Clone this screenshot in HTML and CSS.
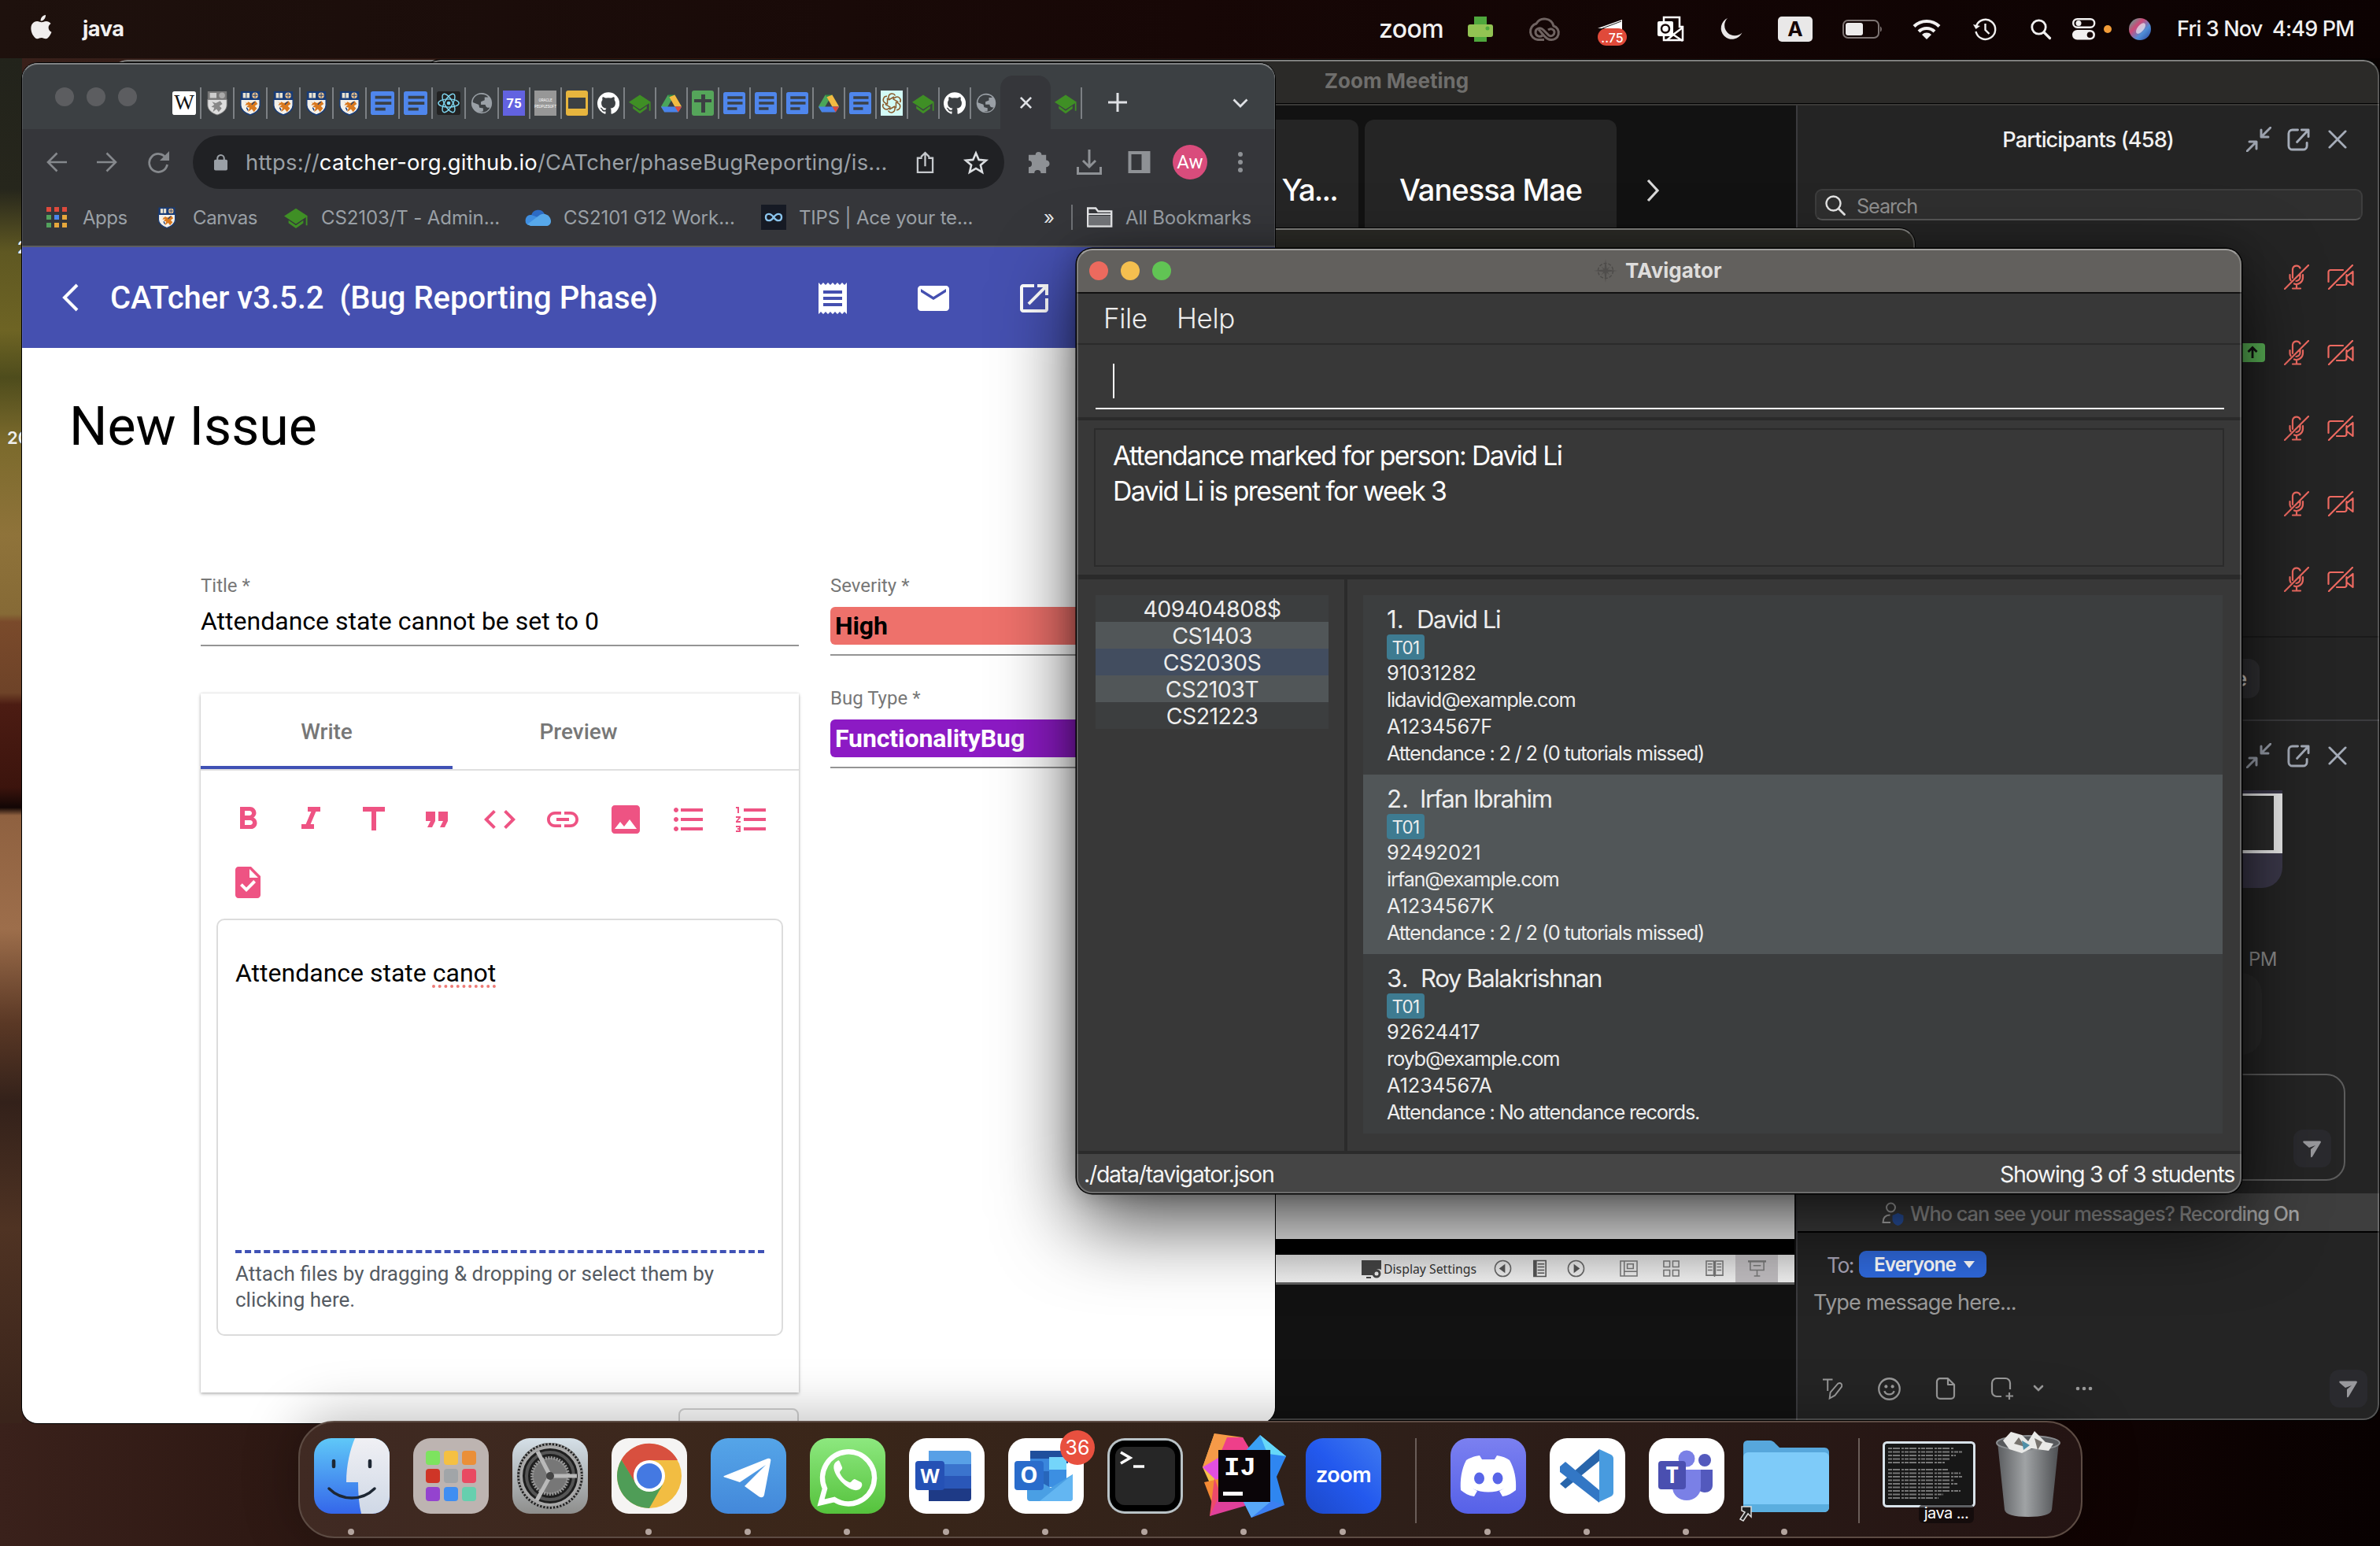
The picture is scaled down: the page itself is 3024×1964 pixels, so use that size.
FILE: index.html
```html
<!DOCTYPE html>
<html lang="en">
<head>
<meta charset="utf-8">
<title>Desktop</title>
<link rel="stylesheet" href="styles.css">
</head>
<body>
<svg class="defs" width="0" height="0">
  <defs>
    <linearGradient id="g-finder" x2="0" y2="1"><stop offset="0" stop-color="#5fc8f8"/><stop offset="1" stop-color="#3466ea"/></linearGradient>
    <linearGradient id="g-face" x2="0" y2="1"><stop offset="0" stop-color="#f0f0f4"/><stop offset="1" stop-color="#cfd8e6"/></linearGradient>
    <linearGradient id="g-settings" x2="0" y2="1"><stop offset="0" stop-color="#d5e0e8"/><stop offset="1" stop-color="#8e8e8c"/></linearGradient>
    <linearGradient id="g-wa" x2="0" y2="1"><stop offset="0" stop-color="#8de87f"/><stop offset="1" stop-color="#55c23c"/></linearGradient>
    <linearGradient id="g-tg" x2="0" y2="1"><stop offset="0" stop-color="#55a5e8"/><stop offset="1" stop-color="#4388da"/></linearGradient>
    <linearGradient id="g-zoom" x1="1" x2="0" y2="1"><stop offset="0" stop-color="#3f7af0"/><stop offset=".5" stop-color="#2359ee"/><stop offset="1" stop-color="#1c48c8"/></linearGradient>
    <linearGradient id="g-discord" x2="0" y2="1"><stop offset="0" stop-color="#7b80f0"/><stop offset="1" stop-color="#5661e8"/></linearGradient>
    <linearGradient id="g-trash" x2="1" y2="0"><stop offset="0" stop-color="#5b5d60"/><stop offset=".45" stop-color="#a0a3a5"/><stop offset="1" stop-color="#4d4f52"/></linearGradient>
    <linearGradient id="g-siri" x2="1" y2="1"><stop offset="0" stop-color="#3fb79a"/><stop offset=".35" stop-color="#cf4a78"/><stop offset=".65" stop-color="#4f8fd8"/><stop offset="1" stop-color="#2a3f9a"/></linearGradient>

    <symbol id="doc" viewBox="0 0 32 32"><rect width="32" height="32" rx="3" fill="#4f86ec"/><path d="M6 6h22v4H6zM6 14h22v4H6zM6 22h14v4H6z" fill="#3a4046"/></symbol>
    <symbol id="crest" viewBox="0 0 32 32"><path d="M3 0h26v11H3z" fill="#183c78"/><path d="M6 2h9v7H6z" fill="#e8e2d2"/><path d="M10.500 2v7" stroke="#183c78"/><circle cx="22.500" cy="5.500" r="4" fill="#efc48c"/><path d="M22.500 2v7M19 5.500h7" stroke="#183c78"/><path d="M3 11h26v8c0 6-6 11-13 13C9 30 3 25 3 19z" fill="#f4f1ea" stroke="#183c78" stroke-width="1.500"/><path d="M8 14l4 2 1-2 4 2 6-3 3 4-4 3 3 3-4 5-3-4-5 4 2-6-4-1 3-3-5 1 2-3z" fill="#d9791f"/><path d="M11 22l2 4M22 14l-4 4" stroke="#183c78" stroke-width="1.500"/></symbol>
    <symbol id="crest-grey" viewBox="0 0 32 32"><path d="M3 0h26v11H3z" fill="#777"/><path d="M6 2h9v7H6z" fill="#ccc"/><circle cx="22.500" cy="5.500" r="4" fill="#aaa"/><path d="M3 11h26v8c0 6-6 11-13 13C9 30 3 25 3 19z" fill="#ddd" stroke="#777"/><path d="M9 14l5 2 6-3 3 4-4 3 3 3-4 5-3-4-5 4 2-6-4-1 4-3z" fill="#888"/></symbol>
    <symbol id="grad" viewBox="0 0 32 32"><path d="M16 4L0 14.500 16 25l16-10.500z" fill="#3f8f25"/><path d="M6 20v4l10 7 10-7v-4l-10 7z" fill="#3f8f25"/><path d="M30.500 15v12" stroke="#3f8f25" stroke-width="2"/></symbol>
    <symbol id="github" viewBox="0 0 32 32"><path fill="#fff" d="M16 .4a16 16 0 0 0-5.060 31.180c.8.150 1.090-.35 1.090-.77v-2.700c-4.450.97-5.390-2.150-5.390-2.150-.73-1.850-1.780-2.340-1.780-2.340-1.450-1 .110-.97.110-.97 1.610.11 2.460 1.650 2.460 1.650 1.430 2.450 3.750 1.740 4.660 1.330.15-1.040.56-1.740 1.020-2.140-3.550-.4-7.290-1.780-7.290-7.910 0-1.750.62-3.170 1.650-4.290-.17-.4-.71-2.030.16-4.230 0 0 1.340-.43 4.400 1.640a15.300 15.300 0 0 1 8 0c3.060-2.070 4.400-1.640 4.400-1.640.87 2.200.33 3.830.16 4.230 1.020 1.120 1.640 2.550 1.640 4.290 0 6.150-3.740 7.500-7.300 7.900.57.500 1.080 1.470 1.080 2.970v4.390c0 .430.290.930 1.100.770A16 16 0 0 0 16 .4z"/></symbol>
    <symbol id="globe" viewBox="0 0 32 32"><circle cx="16" cy="16" r="14" fill="#9aa0a6"/><path d="M15 4c-6 0-11 5-11 11l8 3 1 4 5 1v4c-2 1-4 1-6 0 5 3 12 1 15-5-3 1-6-1-6-4h-6v-4l5-2V8h5c-2-3-6-4-10-4z" fill="#3c4043"/></symbol>
    <symbol id="drive" viewBox="0 0 32 32"><path d="M11 4h10l-5 9z" fill="#2f8d46"/><path d="M11 4L1 21l5 8 10-17z" fill="#4aa65a"/><path d="M21 4l10 17H21L13 7z" fill="#f2bb42"/><path d="M1 21h30l-5 8H6z" fill="#4a83ea"/><path d="M21 21h10l-5 8z" fill="#de4a3c"/></symbol>
    <symbol id="mic-off" viewBox="0 0 32 32"><g fill="none" stroke="#ee6a61" stroke-width="2.200" stroke-linecap="round"><path d="M11 17V6a5 5 0 0 1 9.500-1.500M20.500 12v4a5 5 0 0 1-5 5M7.500 13v4a8 8 0 0 0 1 3M24 13v4a8.300 8.300 0 0 1-11 7.500M16 25v5M11 30.500h10M1 31L31 1"/></g></symbol>
    <symbol id="cam-off" viewBox="0 0 34 32"><g fill="none" stroke="#ee6a61" stroke-width="2.200" stroke-linecap="round" stroke-linejoin="round"><path d="M20 7H4a2.500 2.500 0 0 0-2.500 2.500V22M12 26h10a2.500 2.500 0 0 0 2.500-2.500V13M25 15l7.500-6v17L25 20M2 31L32 1"/></g></symbol>
    <symbol id="shrink" viewBox="0 0 32 32"><g fill="none" stroke="#9ba1ad" stroke-width="3" stroke-linecap="round" stroke-linejoin="round"><path d="M31 1L20 12M19 4v9h9M1 31l11-11M4 19h9v9"/></g></symbol>
    <symbol id="popout" viewBox="0 0 30 30"><g fill="none" stroke="#a5acb8" stroke-width="3" stroke-linecap="round" stroke-linejoin="round"><path d="M14 2H7a5 5 0 0 0-5 5v16a5 5 0 0 0 5 5h14a5 5 0 0 0 5-5v-4M19 2h9v9M27 3L13 18"/></g></symbol>
    <symbol id="cross" viewBox="0 0 26 26"><path d="M2 2l22 22M24 2L2 24" fill="none" stroke="#a5acb8" stroke-width="3" stroke-linecap="round"/></symbol>
    <symbol id="send" viewBox="0 0 24 24"><path d="M1 2.500h20.500c1.500 0 1.800 1 1.200 2L12 22.500c-1 1.400-2 .8-2-.5V13l6-5-8 3-7-6c-1-1-1-2.500 0-2.500z" fill="#98989c"/></symbol>
  </defs>
</svg>

<main class="desktop">
  <span class="desk-label desk-label-a">2</span>
  <span class="desk-label desk-label-b">20</span>

  <header class="menubar">
    <svg class="apple" viewBox="0 0 26 32"><path fill="#f0eeee" d="M18 0c.2 2-0.600 3.900-1.700 5.300C15.100 6.700 13.300 7.800 11.600 7.600c-.2-1.900.7-3.900 1.700-5.100C14.500 1.200 16.500.1 18 0zM24.600 11c-1.900 1.200-3 2.900-3 5.100 0 2.600 1.500 4.700 3.900 5.600-.5 1.600-1.300 3.200-2.300 4.600-1.400 2-2.800 4-5 4-2.200.1-2.900-1.300-5.400-1.300s-3.300 1.200-5.300 1.300c-2.200.1-3.800-2.100-5.200-4.100C-.500 22.200-2 14.800 1.200 10.900 2.700 9 4.900 7.900 7.200 7.900c2.300 0 3.800 1.300 5.700 1.300 1.900 0 3-1.300 5.700-1.300 2.100 0 4.600 1.100 6 3.100z"/></svg>
    <strong class="app-name">java</strong>
    <div class="tray">
      <span class="tray-zoom">zoom</span>
      <svg class="t-print" viewBox="0 0 32 32"><path d="M8 0h16v10H8zM8 22h16v10H8z" fill="#4fa83d"/><rect y="10" width="32" height="16" rx="3" fill="#92c353"/><circle cx="25" cy="15" r="2.500" fill="#4fa83d"/></svg>
      <svg class="t-cc" viewBox="0 0 38 28"><g fill="none" stroke="#6f6361" stroke-width="3"><path d="M20 25.500h-8a10.500 10.500 0 0 1-2-20.500A12 12 0 0 1 32 8a9 9 0 0 1-4 17.500c-4 0-6-3-8-5l-7-8"/><path d="M18 20c-3 2.500-9 1-9-4s6-7 10-3l7 7c4 2 7-1 7-4s-4-6-8-3"/></g></svg>
      <svg class="t-75" viewBox="0 0 38 36"><path d="M0 14L31 3v20H10V14z" fill="#fff"/><path d="M6 14l24-9" stroke="#222"/><rect y="14" width="37" height="22" rx="11" fill="#e04a3a"/><text x="18.500" y="31.500" text-anchor="middle" class="t75">..75</text></svg>
      <svg class="t-outlook" viewBox="0 0 34 32"><path d="M8 1h20v12h4v17H8z" fill="none" stroke="#fff" stroke-width="2.500"/><path d="M8 14l12 9 12-9M12 30l8-7 12 8" fill="none" stroke="#fff" stroke-width="2.500"/><rect y="6" width="20" height="19" rx="2" fill="#fff"/><circle cx="10" cy="15.500" r="5" fill="none" stroke="#150505" stroke-width="2.500"/></svg>
      <svg class="t-moon" viewBox="0 0 28 28"><path d="M9 0a14 14 0 1 0 18.500 18.500A13 13 0 0 1 9 0z" fill="#e9e7e7"/></svg>
      <span class="t-a">A</span>
      <svg class="t-batt" viewBox="0 0 52 24"><rect x="1" y="1" width="45" height="22" rx="6" fill="none" stroke="#7d7473" stroke-width="2"/><rect x="4" y="4" width="22" height="16" rx="3" fill="#ecebeb"/><path d="M48 8.500c2.500 1 2.500 6 0 7z" fill="#7d7473"/></svg>
      <svg class="t-wifi" viewBox="0 0 36 26"><g fill="none" stroke="#f1f0f0" stroke-width="4.200"><path d="M2 9.500a23 23 0 0 1 32 0"/><path d="M8 16a14.500 14.500 0 0 1 20 0"/></g><path d="M18 26l-6-6a8.500 8.500 0 0 1 12 0z" fill="#f1f0f0"/></svg>
      <svg class="t-clock" viewBox="0 0 30 28"><path d="M4 10a12.500 12.500 0 1 1-.500 7M15.500 7v8l5 5" fill="none" stroke="#f1f0f0" stroke-width="2.400"/><path d="M0 8l3.500 6L9 10z" fill="#f1f0f0"/></svg>
      <svg class="t-search" viewBox="0 0 26 26"><circle cx="10.500" cy="10.500" r="8.700" fill="none" stroke="#f1f0f0" stroke-width="2.800"/><path d="M17 17l7.500 7.500" stroke="#f1f0f0" stroke-width="3.200" stroke-linecap="round"/></svg>
      <svg class="t-ctl" viewBox="0 0 30 28"><rect x="1.200" y="1.200" width="27" height="10.500" rx="5.200" fill="none" stroke="#f1f0f0" stroke-width="2.400"/><circle cx="8" cy="6.500" r="3.500" fill="#f1f0f0"/><rect y="15" width="29" height="12.500" rx="6.200" fill="#f1f0f0"/><circle cx="22.500" cy="21.200" r="3.800" fill="#120404"/></svg>
      <i class="t-dot"></i>
      <svg class="t-siri" viewBox="0 0 28 28"><circle cx="14" cy="14" r="14" fill="url(#g-siri)"/><ellipse cx="15" cy="13" rx="8" ry="4" transform="rotate(-50 15 13)" fill="#fff" opacity=".6"/></svg>
      <time class="t-time">Fri 3 Nov&nbsp; 4:49 PM</time>
    </div>
  </header>

  <div class="window back-window"></div>

  <section class="window zoom-window">
    <div class="zoom-title"><span>Zoom Meeting</span></div>
    <div class="zoom-body">
      <div class="stage">
        <div class="gallery">
          <div class="tile tile-a"><span>Ya...</span></div>
          <div class="tile"><span>Vanessa Mae</span></div>
          <svg class="next" viewBox="0 0 18 30"><path d="M3 2l12 13L3 28" fill="none" stroke="#d8d8d8" stroke-width="3.200"/></svg>
        </div>
        <div class="slide"></div>
        <div class="slide-gap"></div>
        <div class="slide-bar">
          <svg class="disp" viewBox="0 0 26 26"><path d="M0 2h25v12a7 7 0 0 0-10 7H0z" fill="#444"/><circle cx="19" cy="19" r="4" fill="none" stroke="#444" stroke-width="3"/><path d="M6 24h6" stroke="#444" stroke-width="2"/></svg>
          <span class="disp-label">Display Settings</span>
          <svg class="sb sb-1" viewBox="0 0 24 24"><circle cx="12" cy="12" r="10.500" fill="none" stroke="#666" stroke-width="1.600"/><path d="M15 6v12l-8-6z" fill="#555"/></svg>
          <svg class="sb sb-2" viewBox="0 0 24 24"><path d="M4 1.500h16v21H4zM9 6h9M9 10h9M9 14h9M9 18h9" fill="none" stroke="#555" stroke-width="1.600"/><path d="M4 1.500h4v21H4z" fill="#555"/></svg>
          <svg class="sb sb-3" viewBox="0 0 24 24"><circle cx="12" cy="12" r="10.500" fill="none" stroke="#666" stroke-width="1.600"/><path d="M9 6v12l8-6z" fill="#555"/></svg>
          <svg class="sb sb-4" viewBox="0 0 24 24"><path d="M1 2h22v20H1zM6 2v20M6 16h17M10 6h8v6h-8z" fill="none" stroke="#777" stroke-width="1.600"/></svg>
          <svg class="sb sb-5" viewBox="0 0 24 24"><path d="M2 2h8v8H2zM14 2h8v8h-8zM2 14h8v8H2zM14 14h8v8h-8z" fill="none" stroke="#777" stroke-width="1.600"/></svg>
          <svg class="sb sb-6" viewBox="0 0 24 24"><path d="M1 2h10v19H1zM13 2h10v19H13zM3 6h6M3 10h6M3 14h6M15 6h6M15 10h6M15 14h6M12 2v21" fill="none" stroke="#777" stroke-width="1.600"/></svg>
          <span class="sb-active"><svg class="sb" viewBox="0 0 24 24"><path d="M0 2.500h24" stroke="#777" stroke-width="2.500"/><path d="M3 3v11h18V3M7 8h10M12 14v7M8 22h8" fill="none" stroke="#777" stroke-width="1.600"/></svg></span>
        </div>
      </div>
      <aside class="sidebar">
        <div class="panel-head">
          <span class="panel-title">Participants (458)</span>
          <svg class="i-shrink"><use href="#shrink"/></svg><svg class="i-pop"><use href="#popout"/></svg><svg class="i-x"><use href="#cross"/></svg>
        </div>
        <div class="psearch"><svg viewBox="0 0 26 26"><circle cx="10.500" cy="10.500" r="9" fill="none" stroke="#e4e4e4" stroke-width="2.400"/><path d="M17 17l7.500 7.500" stroke="#e4e4e4" stroke-width="2.800" stroke-linecap="round"/></svg><span>Search</span></div>
        <ul class="people">
          <li><svg class="i-mic"><use href="#mic-off"/></svg><svg class="i-cam"><use href="#cam-off"/></svg></li>
          <li><span class="share"><svg viewBox="0 0 20 20"><path d="M10 17V4M4.500 9L10 3.500 15.500 9" fill="none" stroke="#111" stroke-width="2.800"/></svg></span><svg class="i-mic"><use href="#mic-off"/></svg><svg class="i-cam"><use href="#cam-off"/></svg></li>
          <li><svg class="i-mic"><use href="#mic-off"/></svg><svg class="i-cam"><use href="#cam-off"/></svg></li>
          <li><svg class="i-mic"><use href="#mic-off"/></svg><svg class="i-cam"><use href="#cam-off"/></svg></li>
          <li><svg class="i-mic"><use href="#mic-off"/></svg><svg class="i-cam"><use href="#cam-off"/></svg></li>
        </ul>
        <div class="pactions"><span class="pbtn">e</span></div>
        <div class="panel-head chat-head">
          <svg class="i-shrink"><use href="#shrink"/></svg><svg class="i-pop"><use href="#popout"/></svg><svg class="i-x"><use href="#cross"/></svg>
        </div>
        <div class="shot"><div class="shot-in"></div></div>
        <div class="stamp"><span>PM</span></div>
        <div class="bubble"></div>
        <div class="reply"><span class="sendbox"><svg><use href="#send"/></svg></span></div>
        <div class="banner">
          <svg viewBox="0 0 28 30"><circle cx="11.500" cy="7" r="5.500" fill="none" stroke="#bbb" stroke-width="2"/><path d="M11 26H1.500c0-7 4-9.500 9-9.500" fill="none" stroke="#bbb" stroke-width="2"/><path d="M20.500 14l7 3v5c0 4-3 7-7 8-4-1-7-4-7-8v-5z" fill="#2b55a8"/></svg>
          <span>Who can see your messages? Recording On</span>
        </div>
        <div class="compose">
          <div class="to"><span class="to-label">To:</span><span class="everyone"><b>Everyone</b><svg viewBox="0 0 14 9"><path d="M0 0h14L7 9z" fill="#fff"/></svg></span></div>
          <div class="hint"><span>Type message here...</span></div>
          <div class="tools">
            <svg class="c1" viewBox="0 0 28 28"><g fill="none" stroke="#9a9a9a" stroke-width="2"><path d="M1 2h13M7.500 2v15"/><path d="M10 27l1-8L21 7.500c4-2 6 1 5 4L17 23z"/></g></svg>
            <svg class="c2" viewBox="0 0 28 28"><circle cx="14" cy="14" r="12.800" fill="none" stroke="#9a9a9a" stroke-width="2.200"/><path d="M8 16.500c2 5.500 10 5.500 12 0" fill="none" stroke="#9a9a9a" stroke-width="2.200"/><circle cx="10" cy="11" r="2" fill="#9a9a9a"/><circle cx="18" cy="11" r="2" fill="#9a9a9a"/></svg>
            <svg class="c3" viewBox="0 0 24 28"><path d="M15 1.200H5a4 4 0 0 0-4 4v17.600a4 4 0 0 0 4 4h14a4 4 0 0 0 4-4V9zM15 1.200V9h8" fill="none" stroke="#9a9a9a" stroke-width="2.200" stroke-linejoin="round"/></svg>
            <svg class="c4" viewBox="0 0 28 28"><path d="M13 24H7a6 6 0 0 1-6-6V7a6 6 0 0 1 6-6h11a6 6 0 0 1 6 6v8M23 19v9M18.500 23.500h9.500" fill="none" stroke="#9a9a9a" stroke-width="2.200"/></svg>
            <svg class="c5" viewBox="0 0 14 10"><path d="M2 2l5 5 5-5" fill="none" stroke="#9a9a9a" stroke-width="2.600" stroke-linecap="round"/></svg>
            <svg class="c6" viewBox="0 0 22 6"><circle cx="3" cy="3" r="2.300" fill="#9a9a9a"/><circle cx="11" cy="3" r="2.300" fill="#9a9a9a"/><circle cx="19" cy="3" r="2.300" fill="#9a9a9a"/></svg>
            <span class="sendbox"><svg><use href="#send"/></svg></span>
          </div>
        </div>
      </aside>
    </div>
  </section>

  <div class="window mid-window"></div>

  <section class="window chrome">
    <div class="tabstrip">
      <div class="lights dim"><i></i><i></i><i></i></div>
      <div class="tabs">
        <span class="tab wide"><svg viewBox="0 0 32 32"><rect width="32" height="32" rx="3" fill="#fff"/><text x="16" y="25" text-anchor="middle" class="wiki">W</text></svg></span>
        <span class="tab wide"><svg><use href="#crest-grey"/></svg></span>
        <span class="tab wide"><svg><use href="#crest"/></svg></span>
        <span class="tab wide"><svg><use href="#crest"/></svg></span>
        <span class="tab wide"><svg><use href="#crest"/></svg></span>
        <span class="tab wide"><svg><use href="#crest"/></svg></span>
        <span class="tab wide"><svg><use href="#doc"/></svg></span>
        <span class="tab wide"><svg><use href="#doc"/></svg></span>
        <span class="tab wide"><svg viewBox="0 0 32 32"><rect width="32" height="32" rx="3" fill="#222"/><g fill="none" stroke="#7fd6f0" stroke-width="1.500"><ellipse cx="16" cy="16" rx="14" ry="5.500"/><ellipse cx="16" cy="16" rx="14" ry="5.500" transform="rotate(60 16 16)"/><ellipse cx="16" cy="16" rx="14" ry="5.500" transform="rotate(120 16 16)"/></g><circle cx="16" cy="16" r="2.500" fill="#7fd6f0"/></svg></span>
        <span class="tab wide"><svg><use href="#globe"/></svg></span>
        <span class="tab"><svg viewBox="2 0 28 32"><rect x="2" width="28" height="32" fill="#6262e0"/><text x="16" y="22" text-anchor="middle" class="n75">75</text></svg></span>
        <span class="tab"><svg viewBox="2 0 28 32"><rect x="2" width="28" height="32" fill="#979797"/><text x="16" y="14" text-anchor="middle" class="orc">ORACLE</text><text x="16" y="22" text-anchor="middle" class="orc">PEOPLESOFT</text></svg></span>
        <span class="tab"><svg viewBox="2 0 28 32"><rect x="2" width="28" height="32" rx="3" fill="#e7b53e"/><path d="M5 9h22v14H5z" fill="#3c4043"/></svg></span>
        <span class="tab"><svg><use href="#github"/></svg></span>
        <span class="tab"><svg><use href="#grad"/></svg></span>
        <span class="tab"><svg><use href="#drive"/></svg></span>
        <span class="tab"><svg viewBox="2 0 28 32"><rect x="2" width="28" height="32" rx="3" fill="#55a55a"/><path d="M14 5h5v23h-5zM5 11h22v4H5z" fill="#3c4043"/></svg></span>
        <span class="tab"><svg><use href="#doc"/></svg></span>
        <span class="tab"><svg><use href="#doc"/></svg></span>
        <span class="tab"><svg><use href="#doc"/></svg></span>
        <span class="tab"><svg><use href="#drive"/></svg></span>
        <span class="tab"><svg><use href="#doc"/></svg></span>
        <span class="tab"><svg viewBox="2 0 28 32"><rect x="2" width="28" height="32" fill="#d3fbf6"/><g fill="none" stroke="#8a5a2c" stroke-width="1.500"><path d="M12 12V8a4.500 4.500 0 0 1 8.500-1.500M12 12l7-4"/><path d="M12 12V8a4.500 4.500 0 0 1 8.500-1.500M12 12l7-4" transform="rotate(60 16 16)"/><path d="M12 12V8a4.500 4.500 0 0 1 8.500-1.500M12 12l7-4" transform="rotate(120 16 16)"/><path d="M12 12V8a4.500 4.500 0 0 1 8.500-1.500M12 12l7-4" transform="rotate(180 16 16)"/><path d="M12 12V8a4.500 4.500 0 0 1 8.500-1.500M12 12l7-4" transform="rotate(240 16 16)"/><path d="M12 12V8a4.500 4.500 0 0 1 8.500-1.500M12 12l7-4" transform="rotate(300 16 16)"/></g></svg></span>
        <span class="tab"><svg><use href="#grad"/></svg></span>
        <span class="tab"><svg><use href="#github"/></svg></span>
        <span class="tab plain"><svg><use href="#globe"/></svg></span>
        <span class="tab active"><svg viewBox="0 0 18 18"><path d="M2 2l14 14M16 2L2 16" stroke="#dfe1e5" stroke-width="2.800"/></svg></span>
        <span class="tab"><svg><use href="#grad"/></svg></span>
      </div>
      <svg class="newtab" viewBox="0 0 24 24"><path d="M12 0v24M0 12h24" stroke="#dfe1e5" stroke-width="3"/></svg>
      <svg class="tabmenu" viewBox="0 0 20 12"><path d="M1.500 1.500L10 10l8.500-8.500" fill="none" stroke="#dfe1e5" stroke-width="2.800"/></svg>
    </div>
    <div class="toolbar">
      <svg class="b-back" viewBox="0 0 26 26"><path d="M26 13H2M13.500 1.500L2 13l11.500 11.500" fill="none" stroke="#85888c" stroke-width="2.600"/></svg>
      <svg class="b-fwd" viewBox="0 0 26 26"><path d="M0 13h24M12.500 1.500L24 13 12.500 24.500" fill="none" stroke="#85888c" stroke-width="2.600"/></svg>
      <svg class="b-rel" viewBox="0 0 28 28"><path d="M24 9A11.500 11.500 0 1 0 25.500 17" fill="none" stroke="#85888c" stroke-width="2.800"/><path d="M28 0v12H16z" fill="#85888c"/></svg>
      <div class="omnibox">
        <svg class="lock" viewBox="0 0 18 22"><rect y="7.500" width="18" height="14.500" rx="2" fill="#9aa0a6"/><path d="M4.500 8V6a4.500 4.500 0 0 1 9 0v2" fill="none" stroke="#9aa0a6" stroke-width="2.200"/></svg>
        <span class="url">https://<b>catcher-org.github.io</b>/CATcher/phaseBugReporting/is...</span>
        <svg class="o-share" viewBox="0 0 24 30"><path d="M8 9H2v19h20V9h-6M12 20V2M6.500 7.500L12 2l5.500 5.500" fill="none" stroke="#c6c9cd" stroke-width="2.400"/></svg>
        <svg class="o-star" viewBox="0 0 30 28"><path d="M15 2.500l3.700 8.400 9.200.8-7 6 2.100 9-8-4.800-8 4.800 2.100-9-7-6 9.200-.8z" fill="none" stroke="#dcdfe2" stroke-width="2.600"/></svg>
      </div>
      <svg class="b-ext" viewBox="0 0 30 30"><path d="M10 5a4 4 0 0 1 8 0h6v7a4.200 4.200 0 0 1 0 9v8h-7a4.200 4.200 0 0 0-8.500 0H1v-8a4.200 4.200 0 0 0 0-8.500V5z" fill="#8e9195"/></svg>
      <svg class="b-dl" viewBox="0 0 32 32"><path d="M16 0v20M8 14l8 8 8-8M1.500 22v8.500h29V22" fill="none" stroke="#8e9195" stroke-width="3"/></svg>
      <svg class="b-side" viewBox="0 0 28 28"><path d="M2 2h24v24H2z" fill="none" stroke="#8e9195" stroke-width="4"/><path d="M17 2h9v24h-9z" fill="#8e9195"/></svg>
      <span class="avatar">Aw</span>
      <svg class="b-more" viewBox="0 0 8 26"><circle cx="4" cy="3" r="3" fill="#8e9195"/><circle cx="4" cy="13" r="3" fill="#8e9195"/><circle cx="4" cy="23" r="3" fill="#8e9195"/></svg>
    </div>
    <nav class="bookmarks">
      <svg class="k-apps" viewBox="0 0 26 26"><path d="M0 0h6v6H0zM10 0h6v6h-6zM20 0h6v6h-6z" fill="#de4a3c"/><path d="M0 10h6v6H0z" fill="#53a25d"/><path d="M10 10h6v6h-6z" fill="#4b86ec"/><path d="M20 10h6v6h-6z" fill="#e6a73c"/><path d="M0 20h6v6H0z" fill="#53a25d"/><path d="M10 20h6v6h-6zM20 20h6v6h-6z" fill="#e6a73c"/></svg>
      <span class="k1">Apps</span>
      <svg class="k-canvas"><use href="#crest"/></svg><span class="k2">Canvas</span>
      <svg class="k-grad"><use href="#grad"/></svg><span class="k3">CS2103/T - Admin...</span>
      <svg class="k-cloud" viewBox="0 0 33 22"><path d="M8 9a9 9 0 0 1 17-2l-13 9z" fill="#2c6bc4"/><path d="M8 8a7 7 0 0 0-4 13l15-9z" fill="#3f8ee0"/><path d="M3 20l16-12c8-4 14 3 14 8 0 4-3 6-6 6H7z" fill="#57a8ea"/></svg><span class="k4">CS2101 G12 Work...</span>
      <svg class="k-tips" viewBox="0 0 32 32"><rect width="32" height="32" fill="#161a24"/><path d="M16 16c-4-6-10-5-10 0s6 6 10 0 10-5 10 0-6 6-10 0z" fill="none" stroke="#8ac4ec" stroke-width="2.400"/></svg><span class="k5">TIPS | Ace your te...</span>
      <span class="more">»</span>
      <i class="vbar"></i>
      <svg class="k-folder" viewBox="0 0 33 26"><path d="M1.200 24.500v-23h10l3 4h17v19z" fill="none" stroke="#e5e6e8" stroke-width="2.400"/><path d="M3 11h27v12H3z" fill="#74767a"/><path d="M2 9h29" stroke="#e5e6e8" stroke-width="2"/></svg>
      <span class="k6">All Bookmarks</span>
    </nav>
    <div class="appbar">
      <svg class="a-back" viewBox="0 0 22 36"><path d="M20 2L4 18l16 16" fill="none" stroke="#fff" stroke-width="4"/></svg>
      <h1>CATcher v3.5.2&nbsp; (Bug Reporting Phase)</h1>
      <svg class="a-i" viewBox="0 0 24 24"><path d="M18 17H6v-2h12v2zm0-4H6v-2h12v2zm0-4H6V7h12v2zM3 22l1.500-1.500L6 22l1.500-1.500L9 22l1.500-1.500L12 22l1.500-1.500L15 22l1.500-1.500L18 22l1.500-1.500L21 22V2l-1.500 1.500L18 2l-1.500 1.500L15 2l-1.500 1.500L12 2l-1.500 1.500L9 2 7.500 3.500 6 2 4.500 3.500 3 2v20z" fill="#fff"/></svg>
      <svg class="a-i" viewBox="0 0 24 24"><path d="M20 4H4c-1.100 0-1.990.9-1.990 2L2 18c0 1.100.9 2 2 2h16c1.100 0 2-.9 2-2V6c0-1.100-.9-2-2-2zm0 4l-8 5-8-5V6l8 5 8-5v2z" fill="#fff"/></svg>
      <svg class="a-i" viewBox="0 0 24 24"><path d="M19 19H5V5h7V3H5c-1.110 0-2 .9-2 2v14c0 1.100.89 2 2 2h14c1.100 0 2-.9 2-2v-7h-2v7zM14 3v2h3.590l-9.830 9.830 1.410 1.410L19 6.410V10h2V3h-7z" fill="#fff"/></svg>
    </div>
    <div class="page">
      <h2>New Issue</h2>
      <div class="form">
        <div class="col-main">
          <label>Title *</label>
          <div class="input">Attendance state cannot be set to 0</div>
          <div class="editor">
            <div class="etabs"><span class="etab on">Write</span><span class="etab">Preview</span></div>
            <div class="etools">
              <span><svg viewBox="0 0 24 24"><path d="M15.600 10.790c.97-.67 1.650-1.770 1.650-2.790 0-2.260-1.750-4-4-4H7v14h7.040c2.090 0 3.710-1.700 3.710-3.790 0-1.520-.86-2.820-2.150-3.420zM10 6.500h3c.83 0 1.500.67 1.500 1.500s-.67 1.500-1.500 1.500h-3v-3zm3.500 9H10v-3h3.500c.83 0 1.500.67 1.500 1.500s-.67 1.500-1.500 1.500z"/></svg></span>
              <span><svg viewBox="0 0 24 24"><path d="M10 4v3h2.210l-3.420 8H6v3h8v-3h-2.210l3.420-8H18V4z"/></svg></span>
              <span><svg viewBox="0 0 24 24"><path d="M5 4v3h5.500v12h3V7H19V4z"/></svg></span>
              <span><svg viewBox="0 0 24 24"><path d="M6 17h3l2-4V7H5v6h3zm8 0h3l2-4V7h-6v6h3z"/></svg></span>
              <span><svg viewBox="0 0 24 24"><path d="M9.400 16.600L4.800 12l4.600-4.600L8 6l-6 6 6 6 1.400-1.400zm5.200 0l4.600-4.600-4.600-4.600L16 6l6 6-6 6-1.400-1.400z"/></svg></span>
              <span><svg viewBox="0 0 24 24"><path d="M3.900 12c0-1.710 1.390-3.100 3.100-3.100h4V7H7c-2.760 0-5 2.240-5 5s2.240 5 5 5h4v-1.900H7c-1.710 0-3.100-1.390-3.100-3.100zM8 13h8v-2H8v2zm9-6h-4v1.900h4c1.710 0 3.100 1.390 3.100 3.100s-1.390 3.100-3.100 3.100h-4V17h4c2.760 0 5-2.240 5-5s-2.240-5-5-5z"/></svg></span>
              <span><svg viewBox="0 0 24 24"><path d="M21 19V5c0-1.100-.9-2-2-2H5c-1.100 0-2 .9-2 2v14c0 1.100.9 2 2 2h14c1.100 0 2-.9 2-2zM8.500 13.500l2.500 3.010L14.500 12l4.500 6H5l3.500-4.500z"/></svg></span>
              <span><svg viewBox="0 0 24 24"><path d="M4 10.500c-.83 0-1.500.67-1.500 1.500s.67 1.500 1.500 1.500 1.500-.67 1.500-1.500-.67-1.500-1.500-1.500zm0-6c-.83 0-1.500.67-1.500 1.500S3.170 7.500 4 7.500 5.500 6.830 5.500 6 4.830 4.500 4 4.500zm0 12c-.83 0-1.500.68-1.500 1.500s.68 1.500 1.500 1.500 1.500-.68 1.500-1.500-.67-1.500-1.500-1.500zM7 19h14v-2H7v2zm0-6h14v-2H7v2zm0-8v2h14V5H7z"/></svg></span>
              <span><svg viewBox="0 0 24 24"><path d="M2 17h2v.5H3v1h1v.5H2v1h3v-4H2v1zm1-9h1V4H2v1h1v3zm-1 3h1.800L2 13.100v.9h3v-1H3.200L5 10.900V10H2v1zm5-6v2h14V5H7zm0 14h14v-2H7v2zm0-6h14v-2H7v2z"/></svg></span>
              <span><svg viewBox="0 0 24 24"><path d="M14 2H6c-1.100 0-2 .9-2 2v16c0 1.100.9 2 2 2h12c1.100 0 2-.9 2-2V8l-6-6zm-3 16l-4-4 1.400-1.400L11 15.200l4.600-4.700L17 12zM13 9V3.500L18.500 9H13z"/></svg></span>
            </div>
            <div class="area">
              <p class="typed">Attendance state <u>canot</u></p>
              <p class="attach">Attach files by dragging &amp; dropping or select them by<br>clicking here.</p>
            </div>
          </div>
          <div class="ghost-btn"></div>
        </div>
        <div class="col-side">
          <label>Severity *</label>
          <div class="select"><b class="high">High</b></div>
          <label class="second">Bug Type *</label>
          <div class="select"><b class="func">FunctionalityBug</b></div>
        </div>
      </div>
    </div>
  </section>

  <section class="window tav">
    <div class="tav-title">
      <div class="lights"><i class="r"></i><i class="y"></i><i class="g"></i></div>
      <div class="tav-name"><svg viewBox="0 0 32 32"><circle cx="16" cy="16" r="9.500" fill="none" stroke="#4c4a48" stroke-width="1.400" stroke-dasharray="4 2"/><path d="M16 1l1.600 12.500 4-3-3 4L31 16l-12.500 1.600 3 4-4-3L16 31l-1.600-12.500-4 3 3-4L1 16l12.500-1.600-3-4 4 3z" fill="#504e4c"/></svg><b>TAvigator</b></div>
    </div>
    <div class="tav-menu"><span class="m1">File</span><span class="m2">Help</span></div>
    <div class="command"><div class="command-line"><i class="caret"></i></div></div>
    <div class="result"><div class="result-box">Attendance marked for person: David Li<br>David Li is present for week 3</div></div>
    <div class="panels">
      <div class="courses">
        <ul>
          <li>409404808$</li><li>CS1403</li><li class="sel">CS2030S</li><li>CS2103T</li><li>CS21223</li>
        </ul>
      </div>
      <div class="students">
        <article><h3><span class="no">1.</span><span>David Li</span></h3><span class="tag">T01</span><p class="num">91031282</p><p>lidavid@example.com</p><p class="num">A1234567F</p><p>Attendance : 2 / 2 (0 tutorials missed)</p></article>
        <article><h3><span class="no no2">2.</span><span>Irfan Ibrahim</span></h3><span class="tag">T01</span><p class="num">92492021</p><p>irfan@example.com</p><p class="num">A1234567K</p><p>Attendance : 2 / 2 (0 tutorials missed)</p></article>
        <article><h3><span class="no no3">3.</span><span>Roy Balakrishnan</span></h3><span class="tag">T01</span><p class="num">92624417</p><p>royb@example.com</p><p class="num">A1234567A</p><p>Attendance : No attendance records.</p></article>
      </div>
    </div>
    <footer class="status"><span>./data/tavigator.json</span><span>Showing 3 of 3 students</span></footer>
  </section>

  <nav class="dock">
    <span class="app run"><svg viewBox="0 0 96 96"><rect width="96" height="96" rx="22" fill="url(#g-finder)"/><path d="M52 0h22a22 22 0 0 1 22 22v52a22 22 0 0 1-22 22H60c-3-12-4-26-4-40H41C41 34 46 14 52 0z" fill="url(#g-face)"/><path d="M25 29v7M71 29v7" stroke="#1e2733" stroke-width="4.500" stroke-linecap="round"/><path d="M19 64c16 16 42 16 58 0" fill="none" stroke="#1e2733" stroke-width="3.500" stroke-linecap="round"/></svg></span>
    <span class="app"><svg viewBox="0 0 96 96"><rect width="96" height="96" rx="22" fill="#bdb4b1"/><g><rect x="16" y="16" width="18" height="18" rx="4" fill="#7de35f"/><rect x="39" y="16" width="18" height="18" rx="4" fill="#f5c042"/><rect x="62" y="16" width="18" height="18" rx="4" fill="#ea8f38"/><rect x="16" y="39" width="18" height="18" rx="4" fill="#cf3527"/><rect x="39" y="39" width="18" height="18" rx="4" fill="#a1a5a8"/><rect x="62" y="39" width="18" height="18" rx="4" fill="#e94a62"/><rect x="16" y="62" width="18" height="18" rx="4" fill="#9443cf"/><rect x="39" y="62" width="18" height="18" rx="4" fill="#3f8ef2"/><rect x="62" y="62" width="18" height="18" rx="4" fill="#66cfae"/></g></svg></span>
    <span class="app"><svg viewBox="0 0 96 96"><rect width="96" height="96" rx="22" fill="url(#g-settings)"/><circle cx="48" cy="48" r="42" fill="#1e1e1e"/><circle cx="48" cy="48" r="37" fill="none" stroke="#a9a9a9" stroke-width="4"/><circle cx="48" cy="48" r="40" fill="none" stroke="#999" stroke-width="4" stroke-dasharray="2 2.200"/><circle cx="48" cy="48" r="23" fill="#777" stroke="#999" stroke-width="4" stroke-dasharray="2 1.500"/><circle cx="48" cy="48" r="30" fill="none" stroke="#555" stroke-width="4"/><path d="M48 48h34M48 48L32 17M48 48L31 79" stroke="#b9b9b9" stroke-width="5"/><circle cx="48" cy="48" r="5" fill="#444"/></svg></span>
    <span class="app run"><svg viewBox="0 0 96 96"><rect width="96" height="96" rx="22" fill="#f5f4f3"/><circle cx="48" cy="48" r="41" fill="#f2bd42"/><path d="M48 48L12.500 27.500A41 41 0 0 1 84 28H48z" fill="#d8503f"/><path d="M12.500 27.500l18 31L48 28z" fill="#d8503f"/><path d="M12.500 27.500L31 58l17 10 17-9-17 30A41 41 0 0 1 12.500 27.500z" fill="#4f9d57"/><circle cx="48" cy="48" r="20" fill="#fff"/><circle cx="48" cy="48" r="16" fill="#4479e2"/></svg></span>
    <span class="app run"><svg viewBox="0 0 96 96"><rect width="96" height="96" rx="22" fill="url(#g-tg)"/><path d="M17 48L72 26c4-1 5 1 4 4l-8 42c-1 4-4 4-7 2L43 61l27-27-33 22-18-6c-3-1-3-1-2-2z" fill="#fff"/></svg></span>
    <span class="app run"><svg viewBox="0 0 96 96"><rect width="96" height="96" rx="22" fill="url(#g-wa)"/><path d="M14 82l5-18a33 33 0 1 1 12 14z" fill="none" stroke="#fff" stroke-width="6.500"/><path d="M35 29c-7 3-6 13 2 23s19 17 26 13c4-3 4-7 2-9l-8-4c-3 0-4 5-7 4-5-2-10-7-12-12 0-3 4-4 3-7l-3-7c-1-2-2-2-3-1z" fill="#fff"/></svg></span>
    <span class="app run"><svg viewBox="0 0 96 96"><rect width="96" height="96" rx="22" fill="#fff"/><path d="M25 16h50a4 4 0 0 1 4 4v13H25z" fill="#58a0e6"/><path d="M25 33h54v15H25z" fill="#3b74cd"/><path d="M25 48h54v16H25z" fill="#2a57b8"/><path d="M25 64h54v12a4 4 0 0 1-4 4H25z" fill="#1e3a86"/><rect x="8" y="29" width="37" height="37" rx="4" fill="#2551b5"/><text x="26.500" y="57" text-anchor="middle" class="glyph glyph-w">W</text></svg></span>
    <span class="app run"><svg viewBox="0 0 96 96"><rect width="96" height="96" rx="22" fill="#fff"/><path d="M28 16h48v16H28z" fill="#1f4f9c"/><path d="M28 26h24v16H28z" fill="#3a86dc"/><path d="M52 24h22v16H52z" fill="#74d5fa"/><path d="M28 42h24v20H28z" fill="#2766bb"/><path d="M52 40h22v22H52z" fill="#3c8fe2"/><path d="M24 46l30 17 28-17v30a4 4 0 0 1-4 4H28a4 4 0 0 1-4-4z" fill="#4a9fe4"/><path d="M82 46v30a4 4 0 0 1-4 4H40z" fill="#63b6f2"/><rect x="8" y="29" width="37" height="37" rx="4" fill="#2a6ccb"/><text x="26.500" y="57" text-anchor="middle" class="glyph">O</text></svg><em class="badge">36</em></span>
    <span class="app run"><svg viewBox="0 0 96 96"><rect width="96" height="96" rx="22" fill="#b9c2c6"/><rect x="3" y="3" width="90" height="90" rx="19" fill="#000"/><rect x="10" y="11" width="76" height="74" rx="12" fill="#262626"/><path d="M17 18l12 7-12 7" fill="none" stroke="#fff" stroke-width="3.500"/><path d="M33 36h14" stroke="#fff" stroke-width="3.500"/></svg></span>
    <span class="app run"><svg viewBox="0 0 96 96"><path d="M10-6L-5 37l20 44L40 20z" fill="#f7c04a"/><path d="M10-6l36 5 8 18-34 30-25-10z" fill="#f59a48"/><path d="M26-1l20 0 12 20-38 24-12 0z" fill="#ee3f8a"/><path d="M-5 37l20-12 4 35z" fill="#e24fe0"/><path d="M-3 56l18-4 0 30-8 0z" fill="#f58a35"/><path d="M4 99l6-48 12 30 24 2z" fill="#ee4a6a"/><path d="M15 76l40 0-6 10-45 13z" fill="#e0409a"/><path d="M68-4l33 27-14 25L46 20z" fill="#3aa0f4"/><path d="M68-4l33 27-20 6z" fill="#66d8f8"/><path d="M101 23l-12 26 10 36-20-4V20z" fill="#2f86f0"/><path d="M46 79h35l18 6-42 16z" fill="#3b7ff2"/><path d="M46 79l11 22 24-20z" fill="#58a8f8"/><rect x="15" y="15" width="66" height="66" fill="#0a0508"/><text x="22" y="47" class="ij">IJ</text><path d="M21 68h25v5H21z" fill="#fff"/></svg></span>
    <span class="app run"><svg viewBox="0 0 96 96"><rect width="96" height="96" rx="22" fill="url(#g-zoom)"/><text x="48" y="56" text-anchor="middle" class="zm">zoom</text></svg></span>
    <i class="dsep"></i>
    <span class="app run"><svg viewBox="0 0 96 96"><rect width="96" height="96" rx="22" fill="url(#g-discord)"/><path d="M37 22c-8 1-14 4-17 6-6 11-8 25-7 38 5 4 10 7 17 8l4-7-6-3c12 6 28 6 40 0l-6 3 4 7c7-1 12-4 17-8 1-14-2-28-8-38-4-3-9-5-16-6l-3 5h-16z" fill="#fff"/><ellipse cx="36.500" cy="51" rx="6.500" ry="7.500" fill="#5865e8"/><ellipse cx="60" cy="51" rx="6.500" ry="7.500" fill="#5865e8"/></svg></span>
    <span class="app run"><svg viewBox="0 0 96 96"><rect width="96" height="96" rx="22" fill="#fff"/><path d="M13 58l7 6 43-35V14z" fill="#2865ab"/><path d="M13 36l7-6 43 36v16L13 43z" fill="#3377c5"/><path d="M63 14l15 7c2 1 3 3 3 5v43c0 2-1 4-3 5l-15 7z" fill="#489bdf"/></svg></span>
    <span class="app run"><svg viewBox="0 0 96 96"><rect width="96" height="96" rx="22" fill="#fff"/><circle cx="71" cy="28" r="8" fill="#5359bd"/><circle cx="48" cy="26" r="10.500" fill="#7a80e6"/><path d="M60 40h21v20c0 6-5 9-10 9s-11-4-11-9z" fill="#5359bd"/><path d="M30 40h36v22c0 10-8 17-18 17s-18-7-18-17z" fill="#7a80e6"/><rect x="12" y="29" width="35" height="36" rx="4" fill="#4a4fb0"/><text x="29.500" y="57" text-anchor="middle" class="glyph">T</text></svg></span>
    <span class="app folder run"><svg viewBox="0 0 110 104"><path d="M1 9c0-4 2-6 6-6h26c6 0 7 2 10 5l4 4h57c4 0 6 3 6 6v70H1z" fill="#57a7dc"/><rect x="1" y="18" width="109" height="76" rx="6" fill="#7ecbf9"/><path d="M1 84h109v4a6 6 0 0 1-6 6H7a6 6 0 0 1-6-6z" fill="#5aaedf"/><path d="M-1 87h12v13l-4-4-6 9-4-2 6-9-4-2z" fill="#222" stroke="#ddd" stroke-width="1.500"/></svg></span>
    <i class="dsep dsep2"></i>
    <span class="mini"><svg viewBox="0 0 118 84"><rect x="1.500" y="1.500" width="115" height="81" rx="4" fill="#171717" stroke="#d8e2ea" stroke-width="3"/><g stroke="#777" stroke-width="2" stroke-dasharray="5 1 9 2 3 1"><path d="M7 9h84M7 13.500h94M7 18h86M7 22.500h80M7 27h72M7 36h76M7 40.500h92M7 45h94M7 49.500h84M7 54h88M7 58.500h80M7 63h92M7 67.500h70M7 72h64"/></g></svg><em>java&nbsp;...</em></span>
    <span class="trash"><svg viewBox="0 0 84 110"><path d="M3 14h78l-9 86c-1 6-12 9-30 9s-29-3-30-9z" fill="url(#g-trash)"/><ellipse cx="42" cy="15" rx="40" ry="9" fill="#57595c" stroke="#8b8e91" stroke-width="2"/><path d="M10 12l10-11 14 4 8 8 8-13 14 14 10 2-6 9-22-3-12 6-16-5z" fill="#e9e9e7"/><path d="M30 8l8 12-14-4zM50 9l10 5-6 10z" fill="#77736e"/><path d="M34 12l10 6-8 6z" fill="#4f8fa8"/></svg></span>
  </nav>
</main>
</body>
</html>
```

FILE: styles.css
```css
* { box-sizing: border-box; }
html, body { margin: 0; padding: 0; }
body { width: 3024px; height: 1964px; overflow: hidden; font-family: Inter, "Liberation Sans", sans-serif; -webkit-font-smoothing: antialiased; }
h1, h2, h3, p, ul { margin: 0; padding: 0; font-weight: 400; }
ul { list-style: none; }
i, em { font-style: normal; }
svg { display: block; flex: none; overflow: visible; }
.defs { position: absolute; }
span, b, i, time, strong { white-space: nowrap; }

.desktop {
  position: relative; width: 3024px; height: 1964px; overflow: hidden;
  background:
    linear-gradient(180deg, #22231b 70px, #26261c 240px, #5f5822 320px, #6e6424 420px, #4e4c1c 480px, #7b6a2c 560px, #8f733a 680px, #866a36 780px, #7a4a2b 790px, #6e4328 880px, #4c1c13 895px, #3c140d 1000px, #120605 1026px, #8f6140 1036px, #9d6e4b 1180px, #5a3825 1300px, #33211a 1400px, #4f3323 1560px, #3a241b 1800px) 0 0 / 28px 1808px no-repeat,
    linear-gradient(90deg, #3a211b 0, #2c1712 400px, #35190f 900px, #2a1612 1500px, #160504 2400px, #080101 3024px);
}
.desk-label { position: absolute; color: #eee; font-size: 22px; font-weight: 600; line-height: 24px; }
.desk-label-a { left: 22px; top: 302px; }
.desk-label-b { left: 9px; top: 544px; }

/* menu bar */
.menubar { position: relative; z-index: 1; height: 74px; padding: 0 33px 1px 40px; display: flex; align-items: center; background: linear-gradient(90deg, #1e110d, #170706 50%, #0c0202); color: #f1f0f0; }
.apple { width: 26px; height: 32px; margin-top: -3px; }
.app-name { margin-left: 39px; font-size: 27.200px; font-weight: 700; letter-spacing: -.5px; }
.tray { margin-left: auto; display: flex; align-items: center; }
.tray-zoom { font-weight: 500; font-size: 32px; line-height: 32px; letter-spacing: -.6px; margin-right: 31px; }
.t-print { width: 32px; height: 32px; margin-right: 45px; }
.t-cc { width: 38px; height: 28px; margin: 4px 50px 0 0; }
.t-75 { width: 38px; height: 36px; margin: 6px 38px 0 0; }
.t75 { font: 500 16px Inter; fill: #fff; }
.t-outlook { width: 34px; height: 32px; margin-right: 46px; }
.t-moon { width: 28px; height: 28px; margin-right: 45px; }
.t-a { width: 44px; height: 32px; border-radius: 5px; background: #e9e8e8; color: #150505; font-weight: 700; font-size: 26px; line-height: 32px; text-align: center; margin-right: 38px; }
.t-batt { width: 52px; height: 24px; margin-right: 37px; }
.t-wifi { width: 36px; height: 26px; margin-right: 41px; }
.t-clock { width: 30px; height: 28px; margin-right: 43px; }
.t-search { width: 26px; height: 26px; margin-right: 27px; }
.t-ctl { width: 30px; height: 28px; margin-right: 10px; }
.t-dot { width: 10px; height: 10px; border-radius: 50%; background: #f29c38; margin-right: 22px; }
.t-siri { width: 28px; height: 28px; margin-right: 33px; }
.t-time { font-size: 27px; font-weight: 500; letter-spacing: -.84px; }

/* windows */
.window { position: absolute; border-radius: 20px; }
.window::after { content: ""; position: absolute; inset: 0; border-radius: inherit; border: 2px solid rgba(255,255,255,.22); border-top-color: rgba(255,255,255,.4); pointer-events: none; }
.back-window { left: 142px; top: 76px; width: 900px; height: 300px; background: #2b2a28; }
.mid-window { left: 1500px; top: 290px; width: 933px; height: 400px; background: #2b2a26; box-shadow: 0 0 0 1px #000; }
.lights { display: flex; gap: 16px; }
.lights i { width: 24px; height: 24px; border-radius: 50%; background: #5c5d60; }
.lights .r { background: #ec6a5e; }
.lights .y { background: #f4bf4f; }
.lights .g { background: #61c454; }

/* meeting window */
.zoom-window { left: 540px; top: 76px; width: 2483px; height: 1728px; background: #121212; overflow: hidden; box-shadow: 0 0 0 1px #000; display: flex; flex-direction: column; }
.zoom-title { height: 58px; background: #2b2a28; border-bottom: 2px solid #3a3937; box-shadow: inset 0 -1px 0 #000; text-align: center; padding-right: 14px; color: #6f6e6c; font-size: 26px; font-weight: 700; line-height: 54px; }
.zoom-body { flex: 1; display: flex; }
.stage { width: 1742px; display: flex; flex-direction: column; }
.gallery { height: 560px; padding: 18px 0 0 866px; display: flex; gap: 8px; }
.tile { width: 320px; height: 180px; border-radius: 12px; background: #252525; color: #fff; font-size: 38px; font-weight: 500; letter-spacing: -.97px; line-height: 48px; text-align: center; padding-top: 65px; }
.tile-a { text-align: right; padding-right: 27px; letter-spacing: -1.800px; }
.next { width: 18px; height: 30px; margin: 75px 0 0 29px; }
.slide { height: 880px; width: 1740px; background: #ededed; }
.slide-gap { height: 20px; background: #000; width: 1740px; }
.slide-bar { height: 38px; width: 1740px; background: linear-gradient(#dcdcdc, #f0f0f0); border-bottom: 3px solid #5f5f5f; padding-left: 1190px; display: flex; align-items: center; }
.disp { width: 26px; height: 26px; }
.disp-label { width: 119px; margin-left: 2px; font: 15.800px "Noto Sans"; color: #333; }
.sb { width: 23px; height: 23px; }
.sb-1 { margin-left: 21px; }
.sb-2 { margin-left: 24px; }
.sb-3 { margin-left: 23px; }
.sb-4 { margin-left: 44px; }
.sb-5 { margin-left: 31px; }
.sb-6 { margin-left: 32px; }
.sb-active { width: 54px; height: 35px; margin-left: 15px; background: #bfbcbf; display: flex; align-items: center; justify-content: center; }

.sidebar { width: 741px; background: #242424; border-left: 2px solid #3b3b3e; display: flex; flex-direction: column; }
.panel-head { height: 86px; display: flex; align-items: center; padding-right: 41px; flex: none; }
.panel-title { margin-left: auto; margin-right: 92px; color: #f2f2f2; font-size: 27.200px; font-weight: 500; letter-spacing: -.9px; padding-top: 1px; }
.i-shrink { width: 32px; height: 32px; margin-right: 20px; }
.i-pop { width: 29px; height: 29px; margin-right: 23px; }
.i-x { width: 24px; height: 24px; }
.psearch { margin: 20px 21px 0 22px; height: 40px; border: 2px solid #3d3d3d; border-bottom-color: #555; border-radius: 9px; background: #2f2f2f; display: flex; align-items: center; padding: 2px 0 0 11px; color: #8e8e8e; font-size: 25.300px; letter-spacing: -1.150px; flex: none; }
.psearch svg { width: 26px; height: 26px; margin-right: 14px; }
.people { height: 530px; padding-top: 24px; border-bottom: 2px solid #1a1a1a; flex: none; }
.people li { height: 96px; display: flex; align-items: center; justify-content: flex-end; padding-right: 32px; }
.i-mic { width: 32px; height: 32px; margin-right: 23px; }
.i-cam { width: 34px; height: 32px; }
.share { width: 40px; height: 24px; border-radius: 4px; background: #5bb557; margin-right: 24px; display: flex; align-items: center; justify-content: flex-end; padding-right: 6px; }
.share svg { width: 20px; height: 20px; }
.pactions { height: 106px; border-bottom: 2px solid #3b3b3e; padding-top: 27px; flex: none; }
.pbtn { display: block; width: 180px; height: 50px; margin-left: 407px; border-radius: 14px; background: #313134; color: #ddd; font-weight: 600; font-size: 26px; line-height: 52px; text-align: right; padding-right: 16px; }
.chat-head { height: 88px; }
.chat-head .i-shrink { margin-left: auto; }
.shot { width: 380px; height: 124px; margin-left: 236px; background: #3b384a; border-radius: 0 0 26px 26px; padding: 4px 0 44px; flex: none; }
.shot-in { height: 76px; border: solid #ececec; border-width: 3px 11px 4px 0; background: #2b2b2b; }
.stamp { height: 108px; padding: 77px 0 0 573px; color: #8d8d8d; font-size: 24px; letter-spacing: -.5px; line-height: 28px; flex: none; }
.bubble { width: 380px; height: 104px; margin-left: 210px; border-radius: 26px; background: #292929; flex: none; }
.reply { width: 640px; height: 136px; margin: 24px 0 0 56px; border: 2px solid #5c5c5c; border-radius: 24px; display: flex; justify-content: flex-end; align-items: flex-end; padding: 0 16px 15px 0; flex: none; }
.sendbox { width: 48px; height: 48px; border-radius: 12px; background: #2a2a2e; display: flex; align-items: center; justify-content: center; }
.sendbox svg { width: 24px; height: 24px; }
.banner { height: 50px; margin-top: 16px; background: #3e3e3e; border-bottom: 2px solid #000; display: flex; align-items: center; padding: 3px 0 0 107px; color: #a0a0a0; font-size: 25.400px; letter-spacing: -1.030px; font-weight: 500; flex: none; }
.banner svg { width: 28px; height: 30px; margin-right: 8px; }
.compose { flex: 1; display: flex; flex-direction: column; }
.to { height: 34px; margin: 23px 0 0 37px; display: flex; align-items: center; }
.to-label { width: 32px; font-size: 26.500px; letter-spacing: -1.600px; color: #a9a5b8; margin-right: 9px; padding-top: 2px; }
.everyone { width: 162px; height: 34px; border-radius: 9px; background: #2f69dc; color: #fff; display: flex; align-items: center; padding-left: 19px; font-size: 24.400px; letter-spacing: -.9px; }
.everyone b { font-weight: 600; }
.everyone svg { width: 14px; height: 9px; margin-left: 10px; }
.hint { margin: 14px 0 0 20px; color: #9a9a9a; font-size: 27.200px; letter-spacing: -.92px; line-height: 36px; }
.tools { display: flex; align-items: center; height: 48px; margin: 67px 15px 0 31px; }
.c1 { width: 27px; height: 28px; }
.c2 { width: 29px; height: 29px; margin-left: 44px; }
.c3 { width: 24px; height: 28px; margin-left: 45px; }
.c4 { width: 28px; height: 28px; margin-left: 46px; }
.c5 { width: 14px; height: 10px; margin-left: 25px; }
.c6 { width: 22px; height: 6px; margin-left: 40px; }
.tools .sendbox { margin-left: auto; }

/* browser window */
.chrome { left: 28px; top: 80px; width: 1592px; height: 1728px; background: #fff; overflow: hidden; display: flex; flex-direction: column; box-shadow: 0 0 0 1px #000; }
.chrome::after { border-width: 2px 1px 0; border-color: rgba(255,255,255,.35) rgba(255,255,255,.12); }
.tabstrip { height: 84px; background: #3c4043; display: flex; align-items: flex-start; padding-left: 42px; flex: none; }
.tabstrip .lights { margin: 31px 40px 0 0; }
.tabs { display: flex; margin-top: 31px; }
.tab { width: 40px; height: 40px; border-right: 2px solid #7c8084; display: flex; align-items: center; justify-content: center; }
.tab.wide { width: 42px; }
.tab.plain { border-right: 0; width: 37px; }
.tab svg { width: 28px; height: 32px; }
.tab.wide svg { width: 30px; height: 32px; }
.tab.active { width: 64px; height: 68px; margin-top: -15px; margin-bottom: -30px; background: #35363a; border: 0; border-radius: 16px 16px 0 0; }
.tab.active svg { width: 17px; height: 17px; }
.newtab { width: 24px; height: 24px; margin: 38px 0 0 33px; }
.tabmenu { width: 20px; height: 12px; margin: 45px 34px 0 auto; }
.wiki { font: 29px "Liberation Serif"; fill: #111; }
.n75 { font: 700 17px Roboto; fill: #fff; }
.orc { font: 4.600px Roboto; fill: #fff; }
.toolbar { height: 84px; background: #35363a; display: flex; align-items: center; padding-left: 31px; flex: none; }
.b-back { width: 26px; height: 26px; margin-right: 38px; }
.b-fwd { width: 26px; height: 26px; margin-right: 38px; }
.b-rel { width: 28px; height: 28px; margin-right: 30px; }
.omnibox { width: 1031px; height: 68px; border-radius: 34px; background: #202124; display: flex; align-items: center; padding-left: 27px; color: #9aa0a6; }
.lock { width: 17px; height: 22px; margin-right: 23px; }
.url { width: 813px; font-size: 27.400px; letter-spacing: .19px; }
.url b { font-weight: 400; color: #fff; }
.o-share { width: 23px; height: 29px; margin-left: 39px; }
.o-star { width: 30px; height: 28px; margin-left: 38px; }
.b-ext { width: 29px; height: 29px; margin-left: 30px; }
.b-dl { width: 32px; height: 32px; margin-left: 33px; }
.b-side { width: 29px; height: 28px; margin-left: 33px; }
.avatar { width: 44px; height: 44px; border-radius: 50%; background: #d94c7c; color: #fff; text-align: center; font: 24px/44px Roboto; margin-left: 28px; }
.b-more { width: 8px; height: 26px; margin-left: 38px; }
.bookmarks { height: 66px; background: #35363a; border-bottom: 2px solid #5c5d61; display: flex; align-items: center; padding: 0 0 8px 31px; color: #9aa0a6; font-size: 24px; letter-spacing: -.18px; flex: none; }
.bookmarks span { flex: none; }
.k1 { width: 56px; letter-spacing: -.45px; }
.k2 { width: 82px; letter-spacing: -.39px; }
.k3 { width: 226px; letter-spacing: -.1px; }
.k4 { width: 217px; letter-spacing: -.02px; }
.k5 { width: 219px; }
.k-apps { width: 26px; height: 26px; margin-right: 20px; }
.k-canvas { width: 26px; height: 31px; margin: 0 20px 0 38px; }
.k-grad { width: 32px; height: 30px; margin: 0 16px 0 33px; }
.k-cloud { width: 33px; height: 22px; margin: 0 16px 0 33px; }
.k-tips { width: 32px; height: 32px; margin: 0 16px 0 34px; }
.more { margin-left: 92px; color: #e6e7e9; width: 13px; }
.vbar { width: 2px; height: 32px; background: #6f7276; margin-left: 22px; }
.k-folder { width: 33px; height: 26px; margin: 0 16px 0 18px; }
.appbar { height: 128px; background: #4550b0; color: #fff; display: flex; align-items: center; padding-left: 50px; flex: none; }
.a-back { width: 22px; height: 36px; margin-right: 40px; }
.appbar h1 { font: 500 40px Roboto; white-space: nowrap; width: 695px; margin-right: 199px; }
.a-i { width: 48px; height: 48px; margin: 2px 80px 0 0; }
.page { flex: 1; padding-top: 68px; font-family: Roboto, sans-serif; color: #000; }
.page h2 { font-size: 68px; line-height: 64px; padding-left: 60px; }
.form { display: flex; gap: 40px; padding: 156px 0 0 227px; }
.col-main { width: 760px; }
.col-side { width: 760px; }
label { display: block; height: 41px; font-size: 24px; line-height: 28px; color: #777; }
.input { height: 50px; border-bottom: 2px solid #949494; font-size: 32px; line-height: 36px; }
.editor { margin-top: 60px; height: 888px; padding: 0 20px; box-shadow: 0 2px 4px rgba(0,0,0,.25), 0 0 3px rgba(0,0,0,.15); }
.etabs { height: 98px; margin: 0 -20px; border-bottom: 2px solid #dfdfdf; display: flex; }
.etab { width: 320px; height: 97px; font-size: 28px; line-height: 97px; text-align: center; font-weight: 500; color: #777; }
.etab.on { height: 96px; border-bottom: 4px solid #3f51b5; }
.etools { display: flex; flex-wrap: wrap; padding-top: 22px; }
.etools span { width: 80px; height: 80px; display: flex; align-items: center; justify-content: center; }
.etools svg { width: 48px; height: 48px; fill: #ee5383; }
.area { margin-top: 6px; height: 530px; border: 2px solid #dcdcdc; border-radius: 10px; padding: 49px 22px 0; display: flex; flex-direction: column; }
.typed { height: 374px; font-size: 32px; line-height: 36px; border-bottom: 4px dashed #3f51b5; }
.typed u { text-decoration: underline dotted #ee7b76 4px; text-underline-offset: 4px; text-decoration-skip-ink: none; }
.attach { padding-top: 10px; font-size: 26px; line-height: 33px; color: #555b63; }
.ghost-btn { width: 153px; height: 72px; margin: 20px 0 0 607px; border: 2px solid #d2d2d2; border-radius: 8px; }
.select { height: 62px; border-bottom: 2px solid #949494; }
.select b { display: block; height: 48px; border-radius: 6px; padding-left: 6px; font-size: 32px; line-height: 49px; font-weight: 700; letter-spacing: -.1px; }
.high { background: #ee716b; }
.func { background: #8c1ac4; color: #fff; }
.second { margin-top: 40px; }

/* TAvigator */
.tav { left: 1368px; top: 316px; width: 1480px; height: 1200px; background: #383838; display: flex; flex-direction: column; box-shadow: 0 0 0 1.500px #000, 0 36px 100px rgba(0,0,0,.7), 0 0 30px rgba(0,0,0,.25); color: #ededed; }
.tav-title { height: 57px; background: #62605d; border-bottom: 2px solid #111; border-radius: 20px 20px 0 0; display: flex; align-items: center; padding-left: 16px; flex: none; }
.tav-name { display: flex; align-items: center; margin-left: 536px; font-size: 26px; color: #dedddc; }
.tav-name svg { width: 32px; height: 32px; margin-right: 9px; }
.tav-menu { height: 65px; border-bottom: 2px solid #2b2b2b; display: flex; align-items: center; padding: 0 0 2px 34px; font-size: 35px; font-weight: 300; letter-spacing: -.4px; flex: none; }
.m1 { width: 93px; }
.command { height: 96px; border-bottom: 4px solid #2a2a2a; padding: 24px 22px 0 24px; flex: none; }
.command-line { height: 58px; border-bottom: 2px solid #fff; padding-left: 22px; }
.caret { display: block; width: 2px; height: 44px; background: #fff; }
.result { height: 202px; border-bottom: 6px solid #2a2a2a; padding: 10px 22px; flex: none; }
.result-box { height: 176px; border: 2px solid #2b2b2b; padding: 11px 22px; font-size: 33.800px; letter-spacing: -1.650px; line-height: 44.600px; color: #fff; }
.panels { height: 726px; display: flex; flex: none; }
.courses { width: 344px; border-left: 3px solid #2e2e2e; border-right: 4px solid #2b2b2b; padding: 20px 20px 0 21px; }
.courses li { height: 34px; background: #3c3e3f; font-size: 28.600px; letter-spacing: -.6px; line-height: 36px; text-align: center; }
.courses li:nth-child(even) { background: #515658; }
.courses li.sel { background: #424d5f; }
.students { flex: 1; padding: 20px 24px 0 20px; }
.students article { height: 228px; padding: 11px 0 0 30px; background: #3c3e3f; }
.students article:nth-child(even) { background: #515658; }
.students h3 { height: 39px; font-size: 31.200px; letter-spacing: -1.450px; line-height: 40px; display: flex; }
.no { width: 38px; letter-spacing: 0; }
.no2 { width: 42px; }
.no3 { width: 43px; }
.tag { display: block; width: 48px; height: 32px; border-radius: 4px; background: #3e7b91; font-size: 22.400px; letter-spacing: -.6px; line-height: 33px; text-align: center; }
.students p { font-size: 25.400px; letter-spacing: -1.220px; line-height: 34px; }
.students p.num { letter-spacing: -.1px; }
.status { height: 54px; background: #454545; border-top: 4px solid #2b2b2b; border-radius: 0 0 20px 20px; display: flex; justify-content: space-between; align-items: center; padding: 0 9px; font-size: 28.600px; letter-spacing: -1.320px; color: #f4f4f4; flex: none; }

/* dock */
.dock { position: absolute; left: 379px; top: 1805px; width: 2267px; height: 149px; border-radius: 46px; border: 2px solid #5c4b43; background: linear-gradient(90deg, #402a23, #3a2619 30%, #30211a 55%, #241413); display: flex; align-items: flex-start; padding: 20px 0 0 18px; box-shadow: 0 -4px 70px rgba(0,0,0,.28); }
.app { position: relative; width: 96px; height: 96px; margin-right: 30px; flex: none; }
.app svg { width: 96px; height: 96px; }
.app.run::after { content: ""; position: absolute; left: 43px; top: 115px; width: 8px; height: 8px; border-radius: 50%; background: #b3a49e; }
.badge { position: absolute; left: 66px; top: -10px; width: 44px; height: 44px; border-radius: 50%; background: #e8503f; color: #fff; font-size: 25px; line-height: 44px; text-align: center; }
.glyph { font: 700 28px "Open Sans"; fill: #fff; }
.glyph-w { font-size: 25px; }
.ij { font: 700 34px "Liberation Mono"; fill: #fff; }
.zm { font: 600 27px Inter; fill: #fff; letter-spacing: -.5px; }
.dsep { width: 2px; height: 108px; background: #6a5d58; margin: 0 43px 0 13px; flex: none; }
.folder { width: 110px; margin-left: -7px; margin-right: 37px; }
.folder svg { width: 110px; height: 104px; }
.folder.run::after { left: 49px; }
.dsep2 { margin: 0 29px 0 0; }
.mini { position: relative; width: 118px; margin: 4px 25px 0 0; flex: none; }
.mini svg { width: 118px; height: 84px; }
.mini em { position: absolute; left: 46px; top: 80px; width: 70px; height: 24px; border-radius: 6px; background: rgba(10,6,6,.6); color: #fff; font-size: 20px; line-height: 22px; letter-spacing: -.6px; text-align: center; }
.trash { margin-top: -9px; }
.trash svg { width: 84px; height: 110px; }
```
